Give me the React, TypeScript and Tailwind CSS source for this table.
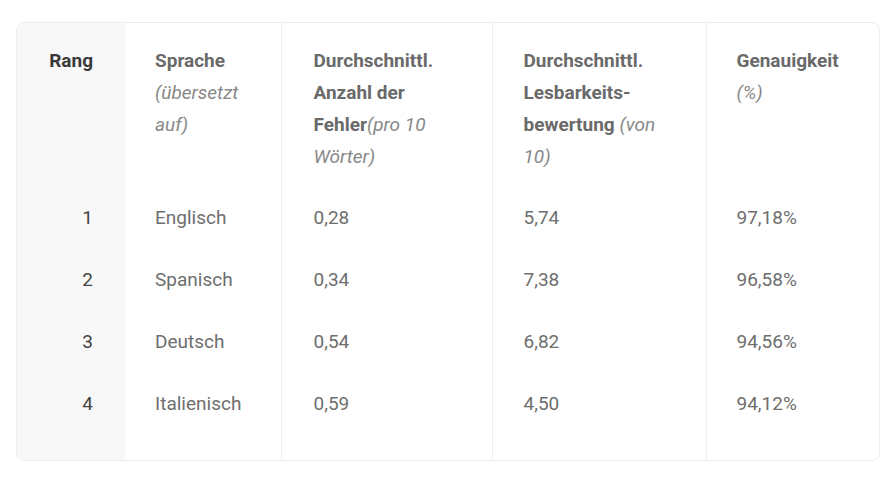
import React from "react";

const rows = [
  ["1", "Englisch", "0,28", "5,74", "97,18%"],
  ["2", "Spanisch", "0,34", "7,38", "96,58%"],
  ["3", "Deutsch", "0,54", "6,82", "94,56%"],
  ["4", "Italienisch", "0,59", "4,50", "94,12%"],
];

export default function App() {
  return (
    <div
      className="w-[890px] h-[500px] bg-white pt-[22px] pl-[16px]"
      style={{ fontFamily: "Roboto, 'Liberation Sans', sans-serif" }}
    >
      <div className="w-[864px] rounded-[8px] border border-[#ededed] overflow-hidden">
        <table className="table-fixed border-collapse text-[19px] leading-[32px] text-[#6e6e6e]">
          <colgroup>
            <col className="w-[108px]" />
            <col className="w-[156px]" />
            <col className="w-[211px]" />
            <col className="w-[214px]" />
            <col className="w-[173px]" />
          </colgroup>
          <thead>
            <tr className="align-top">
              <th className="bg-[#f8f8f8] text-right pr-[32px] pt-[22px] pb-[14px] font-bold text-[#3a3a3a]">
                Rang
              </th>
              <th className="text-left px-[30px] pt-[22px] pb-[14px] font-bold text-[#6a6a6a]">
                Sprache <span className="italic font-normal text-[#888]">(übersetzt auf)</span>
              </th>
              <th className="text-left pl-[32px] pr-[20px] pt-[22px] pb-[14px] font-bold text-[#6a6a6a] border-l border-[#ededed]">
                Durchschnittl. Anzahl der Fehler<span className="italic font-normal text-[#888]">(pro 10 Wörter)</span>
              </th>
              <th className="text-left pl-[31px] pr-[30px] pt-[22px] pb-[14px] font-bold text-[#6a6a6a] border-l border-[#ededed]">
                Durchschnittl. Lesbarkeits-bewertung <span className="italic font-normal text-[#888]">(von 10)</span>
              </th>
              <th className="text-left pl-[30px] pr-[20px] pt-[22px] pb-[14px] font-bold text-[#6a6a6a] border-l border-[#ededed]">
                Genauigkeit <span className="italic font-normal text-[#888]">(%)</span>
              </th>
            </tr>
          </thead>
          <tbody>
            {rows.map((r, i) => (
              <tr key={r[0]}>
                <td
                  className={`bg-[#f8f8f8] text-right pr-[32px] pt-[15px] text-[#444] ${i === 3 ? "pb-[40px]" : "pb-[15px]"}`}
                >
                  {r[0]}
                </td>
                <td className={`px-[30px] pt-[15px] ${i === 3 ? "pb-[40px]" : "pb-[15px]"}`}>{r[1]}</td>
                <td className={`pl-[32px] pt-[15px] border-l border-[#ededed] ${i === 3 ? "pb-[40px]" : "pb-[15px]"}`}>{r[2]}</td>
                <td className={`pl-[31px] pt-[15px] border-l border-[#ededed] ${i === 3 ? "pb-[40px]" : "pb-[15px]"}`}>{r[3]}</td>
                <td className={`pl-[30px] pt-[15px] border-l border-[#ededed] ${i === 3 ? "pb-[40px]" : "pb-[15px]"}`}>{r[4]}</td>
              </tr>
            ))}
          </tbody>
        </table>
      </div>
    </div>
  );
}
